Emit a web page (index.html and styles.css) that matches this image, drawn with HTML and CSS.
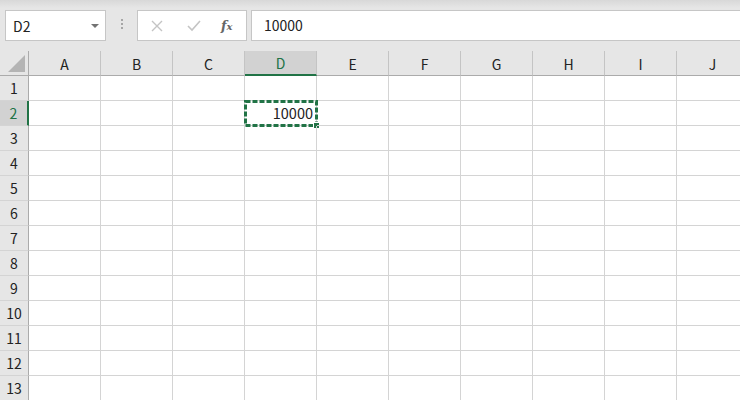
FILE: index.html
```
<!DOCTYPE html>
<html lang="ja">
<head>
<meta charset="UTF-8" />
<title>Book1</title>
<link rel="stylesheet" href="styles.css">
</head>
<body>

<div class="toolbar">
  <div class="namebox">
    <span>D2</span>
    <span class="caret"></span>
  </div>
  <div class="grip"><i></i><i></i><i></i></div>
  <div class="fxbar">
    <svg class="ico" width="14" height="14" viewBox="0 0 14 14"><path d="M2 2 L12 12 M12 2 L2 12" stroke="#c4c4c4" stroke-width="1.4" fill="none"/></svg>
    <svg class="ico" width="16" height="14" viewBox="0 0 16 14"><path d="M2 7 L6 11 L14 2" stroke="#c4c4c4" stroke-width="1.6" fill="none"/></svg>
    <span class="fx">f<sub>x</sub></span>
  </div>
  <div class="formula">10000</div>
</div>

<div class="sheet">
  <div class="hd corner"><span class="tri"></span></div>
  <div class="hd col">A</div>
  <div class="hd col">B</div>
  <div class="hd col">C</div>
  <div class="hd col sel">D</div>
  <div class="hd col">E</div>
  <div class="hd col">F</div>
  <div class="hd col">G</div>
  <div class="hd col">H</div>
  <div class="hd col">I</div>
  <div class="hd col">J</div>
</div>

<div class="sheet" id="body"></div>

<script>
  const body = document.getElementById('body');
  for (let r = 1; r <= 13; r++) {
    const h = document.createElement('div');
    h.className = 'hd row' + (r === 2 ? ' sel' : '');
    h.textContent = r;
    body.appendChild(h);
    for (let c = 0; c < 10; c++) {
      const cell = document.createElement('div');
      cell.className = 'cell';
      if (r === 2 && c === 3) {
        cell.classList.add('active');
        cell.innerHTML = '<span class="num">10000</span><div class="ants"><svg width="74" height="27"><rect x="1.5" y="1.5" width="71" height="24" fill="none" stroke="#217346" stroke-width="3" stroke-dasharray="5 2"/></svg><span class="handle"></span></div>';
      }
      body.appendChild(cell);
    }
  }
</script>

</body>
</html>
```
FILE: styles.css
```
html, body {
  margin: 0;
  height: 100%;
  overflow: hidden;
}
body {
  background: #fff;
  font-family: "Noto Sans CJK JP", "Noto Sans", sans-serif;
  color: #222;
}
.toolbar {
  height: 51px;
  box-sizing: border-box;
  padding: 10px 0 0 5px;
  display: flex;
  align-items: flex-start;
  background: linear-gradient(#d8d8d8, #e6e6e6 8px);
}
.namebox {
  width: 101px;
  height: 31px;
  box-sizing: border-box;
  border: 1px solid #c6c6c6;
  background: #fff;
  display: flex;
  align-items: center;
  justify-content: space-between;
  padding: 0 6px 0 7px;
  font-size: 14px;
}
.caret {
  width: 0;
  height: 0;
  border-left: 4px solid transparent;
  border-right: 4px solid transparent;
  border-top: 4px solid #737373;
}
.grip {
  width: 31px;
  display: flex;
  flex-direction: column;
  align-items: center;
  gap: 2px;
  padding-top: 9px;
}
.grip i {
  width: 2px;
  height: 2px;
  background: #a6a6a6;
}
.fxbar {
  width: 110px;
  height: 31px;
  box-sizing: border-box;
  border: 1px solid #c6c6c6;
  background: #fff;
  display: flex;
  align-items: center;
  padding-left: 12px;
  gap: 22px;
}
.fx {
  font-family: "DejaVu Serif", serif;
  font-style: italic;
  font-weight: bold;
  font-size: 13px;
  color: #666;
  margin-left: -3px;
}
.fx sub {
  font-size: 10px;
  vertical-align: baseline;
}
.formula {
  flex: 1;
  margin-left: 4px;
  height: 31px;
  box-sizing: border-box;
  border: 1px solid #c6c6c6;
  border-right: none;
  background: #fff;
  font-size: 14px;
  line-height: 28px;
  padding-left: 12px;
}
.sheet {
  display: grid;
  grid-template-columns: 29px repeat(10, 72px);
  grid-auto-rows: 25px;
}
.hd {
  background: #e6e6e6;
  box-sizing: border-box;
  font-size: 14px;
  display: flex;
  align-items: center;
  justify-content: center;
  color: #222;
}
.col {
  border-right: 1px solid #c4c4c4;
  border-bottom: 1px solid #ababab;
  padding-top: 1px;
}
.col.sel {
  background: #d2d2d2;
  border-bottom: 2px solid #217346;
  color: #217346;
}
.corner {
  border-right: 1px solid #ababab;
  border-bottom: 1px solid #ababab;
  position: relative;
}
.tri {
  position: absolute;
  right: 3px;
  bottom: 3px;
  width: 0;
  height: 0;
  border-left: 17px solid transparent;
  border-bottom: 17px solid #b4b4b4;
}
.row {
  border-right: 1px solid #ababab;
  border-bottom: 1px solid #d4d4d4;
}
.row.sel {
  background: #d2d2d2;
  border-right: 2px solid #217346;
  color: #217346;
}
.cell {
  box-sizing: border-box;
  border-right: 1px solid #d4d4d4;
  border-bottom: 1px solid #d4d4d4;
  position: relative;
}
.num {
  position: absolute;
  right: 3px;
  top: 1px;
  font-size: 14.5px;
  color: #222;
}
.ants {
  position: absolute;
  left: -1px;
  top: -1px;
  width: 74px;
  height: 27px;
}
.ants svg {
  display: block;
}
.handle {
  position: absolute;
  right: -2px;
  bottom: -2px;
  width: 5px;
  height: 5px;
  background: #217346;
  border: 1px solid #fff;
}
```
